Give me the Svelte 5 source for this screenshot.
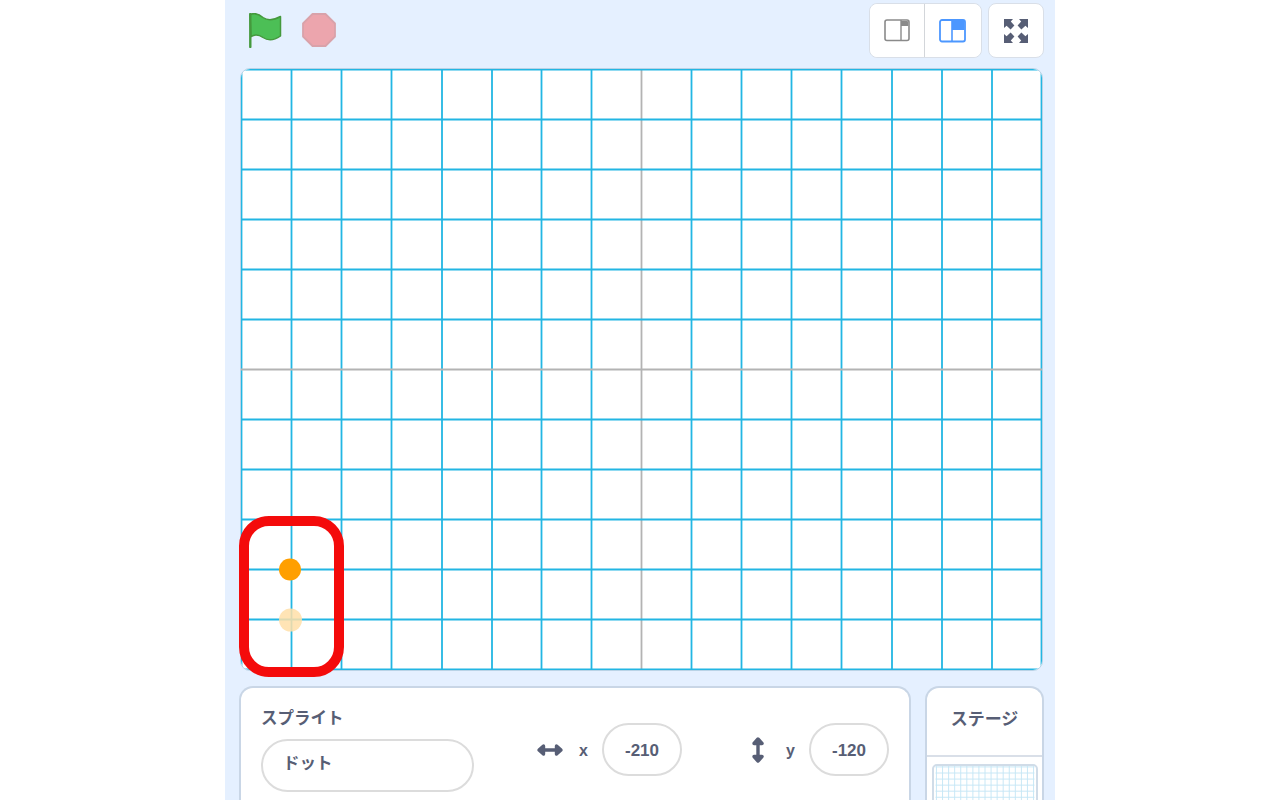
<script lang="ts">
  // grid positions read off the stage, relative to the drawing area at (241, 69)
  const vLines = [0.5, 50.5, 100.5, 150.5, 201, 251, 300.5, 350.5, 400.5, 450.5, 500.5, 550.5, 600.5, 651, 701, 751, 800.5];
  const hLines = [0.5, 50.5, 100.5, 150.5, 200.5, 250.5, 350.5, 400.5, 450.5, 500.5, 550.5, 600.5];
  const axisX = 400.5;
  const axisY = 300.5;
  const thumbLines = Array.from({ length: 17 }, (_, i) => i * 6.5 + 1);
</script>

<div class="page">
  <div class="column">
    <div class="controls">
      <div class="run-buttons">
        <svg width="34" height="35" viewBox="0 0 34 35" aria-label="Go">
          <path d="M2 1.5 C7 -0.5 11 1 15 4.5 C20 8 26 7 32.5 3.5 L32.5 23 C26 27.5 20 28 15 24.5 C11 21.5 7 21 3 23.5 Z" fill="#4cbf56" stroke="#45993d" stroke-width="1.5" stroke-linejoin="round" />
          <path d="M2.3 1 V34" stroke="#45993d" stroke-width="2.4" stroke-linecap="round" />
        </svg>
        <svg width="34" height="34" viewBox="0 0 34 34" aria-label="Stop">
          <polygon points="10.5,1 23.5,1 33,10.5 33,23.5 23.5,33 10.5,33 1,23.5 1,10.5" fill="#eca5ad" stroke="#d9a2aa" stroke-width="1.8" stroke-linejoin="round" />
        </svg>
      </div>
      <div class="view-buttons">
        <div class="button-group">
          <button class="view-btn first" aria-label="Small stage">
            <svg width="26" height="24" viewBox="0 0 26 24">
              <rect x="1" y="1" width="24" height="20.5" rx="2" fill="#fff" stroke="#8a8a8a" stroke-width="1.6" />
              <path d="M17 2 H23 a1.2 1.2 0 0 1 1.2 1.2 V7 H17 Z" fill="#8a8a8a" />
              <path d="M17 1 V21.5" stroke="#8a8a8a" stroke-width="1.4" />
            </svg>
          </button>
          <button class="view-btn second" aria-label="Large stage">
            <svg width="28" height="24" viewBox="0 0 28 24">
              <rect x="1" y="1" width="25" height="21.5" rx="2" fill="#fff" stroke="#4c97ff" stroke-width="1.8" />
              <path d="M13 1.5 H24 a1.5 1.5 0 0 1 1.5 1.5 V11 H13 Z" fill="#4c97ff" />
              <path d="M13 1 V22.5" stroke="#4c97ff" stroke-width="1.6" />
            </svg>
          </button>
        </div>
        <button class="view-btn single" aria-label="Full screen">
          <svg width="26" height="26" viewBox="0 0 26 26" fill="#575e75">
            <path d="M1 1 H10 L7.8 3.6 L11.4 7.6 L7.6 11.4 L3.6 7.8 L1 10 Z" />
            <path d="M25 1 H16 L18.2 3.6 L14.6 7.6 L18.4 11.4 L22.4 7.8 L25 10 Z" />
            <path d="M1 25 H10 L7.8 22.4 L11.4 18.4 L7.6 14.6 L3.6 18.2 L1 16 Z" />
            <path d="M25 25 H16 L18.2 22.4 L14.6 18.4 L18.4 14.6 L22.4 18.2 L25 16 Z" />
          </svg>
        </button>
      </div>
    </div>

    <div class="stage">
      <svg class="grid" width="801" height="601" viewBox="0 0 801 601">
        {#each vLines as x}
          <line x1={x} x2={x} y1="0" y2="601" class={x === axisX ? 'axis' : 'line'} />
        {/each}
        {#each hLines as y}
          <line x1="0" x2="801" y1={y} y2={y} class="line" />
        {/each}
        <line x1="0" x2="801" y1={axisY} y2={axisY} class="axis" />
        <circle cx="49" cy="500.5" r="11" fill="#ff9f00" />
        <circle cx="49.5" cy="551" r="11.5" fill="#ffdfa8" fill-opacity="0.85" />
      </svg>
      <div class="highlight"></div>
    </div>

    <div class="lower">
      <div class="sprite-info">
        <div class="name-field">
          <span class="label">スプライト</span>
          <div class="pill name-pill">ドット</div>
        </div>
        <div class="coord coord-x">
          <svg width="28" height="14" viewBox="0 0 28 14">
            <path d="M3 7 H25 M7.5 3 L3 7 L7.5 11 Z M20.5 3 L25 7 L20.5 11 Z" fill="#575e75" stroke="#575e75" stroke-width="3.4" stroke-linejoin="round" />
          </svg>
          <span class="axis-name">x</span>
          <div class="pill value-pill">-210</div>
        </div>
        <div class="coord coord-y">
          <svg width="14" height="28" viewBox="0 0 14 28">
            <path d="M7 3 V25 M3 7.5 L7 3 L11 7.5 Z M3 20.5 L7 25 L11 20.5 Z" fill="#575e75" stroke="#575e75" stroke-width="3.4" stroke-linejoin="round" />
          </svg>
          <span class="axis-name">y</span>
          <div class="pill value-pill">-120</div>
        </div>
      </div>

      <div class="stage-panel">
        <div class="stage-title">ステージ</div>
        <div class="thumb-area">
          <svg class="thumb" width="106" height="60" viewBox="0 0 106 60">
            {#each thumbLines as p}
              <line x1={p} x2={p} y1="0" y2="60" />
              <line x1="0" x2="106" y1={p} y2={p} />
            {/each}
          </svg>
        </div>
      </div>
    </div>
  </div>
</div>

<style>
  :global(body) {
    margin: 0;
    background: #fff;
  }
  .page {
    height: 800px;
    overflow: hidden;
    padding-left: 225px;
    font-family: "Liberation Sans", "Noto Sans CJK JP", sans-serif;
    color: #575e75;
  }
  .column {
    width: 830px;
    height: 800px;
    box-sizing: border-box;
    background: #e5f0ff;
    padding: 3px 11px 0 15px;
    display: flex;
    flex-direction: column;
  }
  .controls {
    display: flex;
    justify-content: space-between;
    height: 55px;
    margin-bottom: 10px;
  }
  .run-buttons {
    display: flex;
    align-items: flex-start;
    gap: 20px;
    padding: 10px 0 0 8px;
  }
  .run-buttons svg {
    display: block;
  }
  .view-buttons {
    display: flex;
    gap: 6px;
  }
  .button-group {
    display: flex;
    background: #fff;
    border: 1px solid #d9dfe8;
    border-radius: 8px;
    box-sizing: border-box;
    height: 55px;
  }
  .view-btn {
    padding: 0;
    border: none;
    background: #fff;
    border-radius: 8px;
    display: flex;
    align-items: center;
    justify-content: center;
  }
  .view-btn.first {
    width: 54px;
  }
  .view-btn.second {
    border-left: 1px solid #d3d6da;
    border-radius: 0 8px 8px 0;
    width: 57px;
  }
  .view-btn.single {
    width: 56px;
    height: 55px;
    box-sizing: border-box;
    border: 1px solid #d9dfe8;
  }
  .stage {
    position: relative;
    width: 803px;
    height: 603px;
    box-sizing: border-box;
    background: #fff;
    border: 1px solid #b9d3e6;
    border-radius: 10px;
  }
  .grid {
    display: block;
    border-radius: 9px;
  }
  .line {
    stroke: #22b6e3;
    stroke-width: 1.8;
  }
  .axis {
    stroke: #b3b3b3;
    stroke-width: 1.8;
  }
  .highlight {
    position: absolute;
    left: -2px;
    top: 447px;
    width: 105px;
    height: 161px;
    box-sizing: border-box;
    border: 10px solid #f40b0b;
    border-radius: 30px;
  }
  .lower {
    display: flex;
    gap: 14px;
    margin-top: 15px;
    margin-left: -1px;
    flex: 1;
  }
  .sprite-info {
    width: 672px;
    box-sizing: border-box;
    background: #fff;
    border: 2px solid #c9d6e6;
    border-bottom: none;
    border-radius: 14px 14px 0 0;
    display: flex;
    align-items: flex-start;
    padding: 0 20px;
  }
  .name-field {
    display: flex;
    flex-direction: column;
    padding-top: 20px;
    width: 214px;
  }
  .label {
    font-size: 16.5px;
    font-weight: 700;
    line-height: 20px;
    margin-bottom: 11px;
  }
  .pill {
    box-sizing: border-box;
    background: #fff;
    border: 2px solid #dcdcdc;
    border-radius: 27px;
    height: 53px;
    display: flex;
    align-items: center;
    font-size: 17px;
    font-weight: 700;
  }
  .name-pill {
    padding: 0 0 8px 20px;
    font-size: 16.5px;
  }
  .value-pill {
    width: 80px;
    justify-content: center;
    padding-top: 2px;
  }
  .coord {
    display: flex;
    align-items: center;
    margin-top: 35px;
  }
  .coord-x {
    margin-left: 62px;
  }
  .coord-y {
    margin-left: 69px;
  }
  .axis-name {
    font-size: 16px;
    font-weight: 700;
    margin: 2px 13px 0 15px;
    width: 10px;
  }
  .coord-y .axis-name {
    margin-left: 21px;
  }
  .stage-panel {
    width: 119px;
    box-sizing: border-box;
    background: #fff;
    border: 2px solid #c9d6e6;
    border-bottom: none;
    border-radius: 14px 14px 0 0;
    display: flex;
    flex-direction: column;
  }
  .stage-title {
    height: 69px;
    padding-bottom: 8px;
    box-sizing: border-box;
    display: flex;
    align-items: center;
    justify-content: center;
    font-size: 17px;
    font-weight: 700;
    border-bottom: 2px solid #d9dfe8;
  }
  .thumb-area {
    padding: 7px 5px 0;
  }
  .thumb {
    display: block;
    box-sizing: border-box;
    border: 2px solid #d0dce8;
    border-radius: 5px;
    background: #fff;
    width: 106px;
    stroke: #c5e6f5;
    stroke-width: 1;
  }
</style>
